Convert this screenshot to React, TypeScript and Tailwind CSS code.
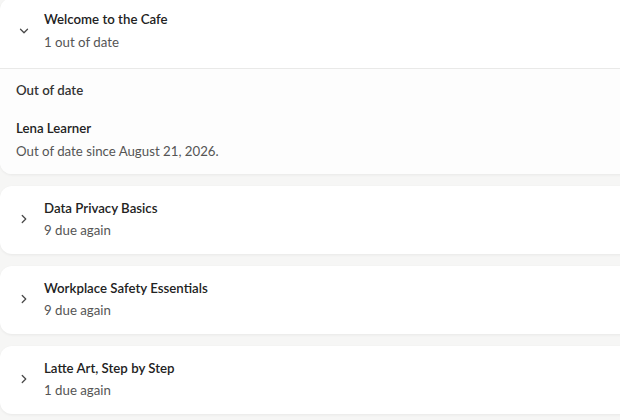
import { ChevronDown, ChevronRight } from "lucide-react";

const courses = [
  { title: "Data Privacy Basics", note: "9 due again" },
  { title: "Workplace Safety Essentials", note: "9 due again" },
  { title: "Latte Art, Step by Step", note: "1 due again" },
];

function Header({ title, note, open }: { title: string; note: string; open?: boolean }) {
  return (
    <div className={`flex items-center pl-[17px] ${open ? "h-[70px] pb-[4px]" : "h-[68px] pb-[2px]"}`}>
      <span className="w-[14px] flex justify-center text-[#4a4a4a]">
        {open ? (
          <ChevronDown size={16} strokeWidth={2.2} />
        ) : (
          <ChevronRight size={16} strokeWidth={2.2} />
        )}
      </span>
      <div className={`ml-[13px] flex flex-col ${open ? "gap-[4px]" : "gap-[3px]"}`}>
        <span className="text-[13.25px] leading-[19px] font-semibold text-[#222]">{title}</span>
        <span className="text-[13.25px] leading-[19px] text-[#555]">{note}</span>
      </div>
    </div>
  );
}

export default function App() {
  return (
    <div
      className="w-[620px] h-[420px] overflow-hidden bg-[#f6f6f5]"
      style={{ fontFamily: "Lato, 'Noto Sans', sans-serif" }}
    >
      <div className="-mt-[2px] w-[640px] flex flex-col gap-[12px]">
        <div className="bg-white rounded-[12px] shadow-[0_1px_3px_rgba(0,0,0,0.06)]">
          <Header title="Welcome to the Cafe" note="1 out of date" open />
          <div className="border-t border-[#e9e9e8] bg-[#fdfdfd] rounded-b-[12px] px-[16px] pt-[12px] pb-[13px]">
            <div className="text-[13.25px] leading-[19px] font-semibold text-[#333]">Out of date</div>
            <div className="mt-[19px] text-[13.25px] leading-[19px] font-semibold text-[#222]">Lena Learner</div>
            <div className="mt-[4px] text-[13.25px] leading-[19px] text-[#555]">
              Out of date since August 21, 2026.
            </div>
          </div>
        </div>
        {courses.map((c) => (
          <div key={c.title} className="bg-white rounded-[12px] shadow-[0_1px_3px_rgba(0,0,0,0.06)]">
            <Header title={c.title} note={c.note} />
          </div>
        ))}
      </div>
    </div>
  );
}
